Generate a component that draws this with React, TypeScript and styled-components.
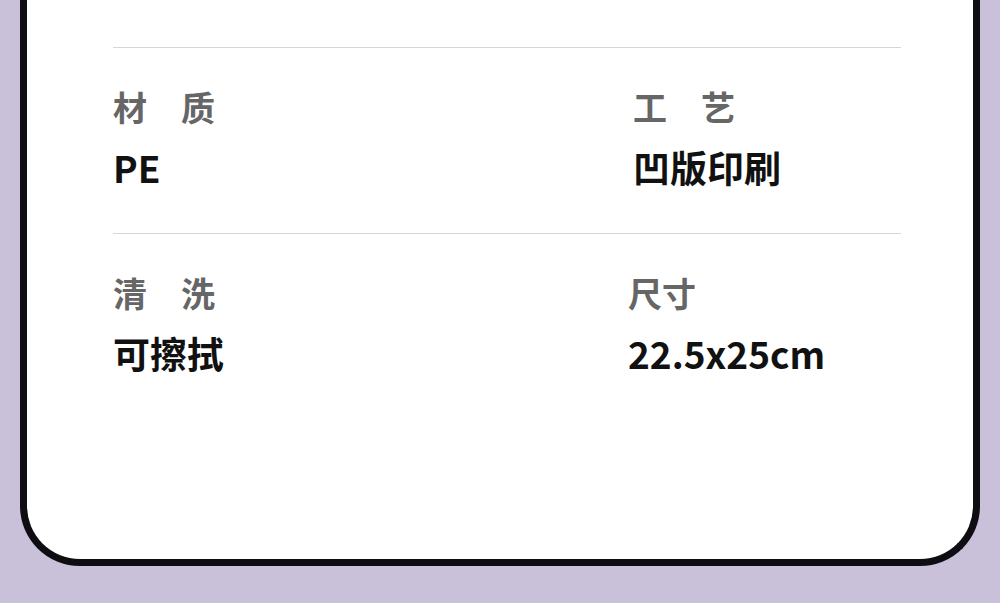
import * as React from 'react';
import styled, { createGlobalStyle } from 'styled-components';

const GlobalStyle = createGlobalStyle`
  html, body {
    margin: 0;
    padding: 0;
    background: #c9c0da;
    overflow: hidden;
  }
  body {
    font-family: "Noto Sans CJK SC", "Noto Sans", sans-serif;
  }
`;

const Page = styled.div`
  width: 1000px;
  height: 603px;
  padding: 0 20px;
  box-sizing: border-box;
  background: #c9c0da;
`;

const Card = styled.div`
  height: 566px;
  box-sizing: border-box;
  background: #fff;
  border: 7px solid #0d0d12;
  border-top: none;
  border-radius: 0 0 60px 60px;
  padding: 47px 72px 0 86px;
`;

const Row = styled.div`
  display: grid;
  grid-template-columns: 518px 1fr;
  border-top: 1.5px solid #d6d6d6;
  height: 186px;
  box-sizing: border-box;
  padding-top: 36px;
`;

const Cell = styled.div<{ $shift?: number }>`
  display: flex;
  flex-direction: column;
  gap: 14px;
  margin-left: ${(p) => p.$shift ?? 0}px;
`;

const Label = styled.div`
  font-size: 34px;
  line-height: 46px;
  font-weight: 700;
  color: #666666;
  white-space: pre;
`;

const Value = styled.div`
  font-size: 37px;
  line-height: 46px;
  font-weight: 700;
  color: #111111;
`;

const specs = [
  [
    { label: '材\u3000质', value: 'PE', shift: 0 },
    { label: '工\u3000艺', value: '凹版印刷', shift: 2 },
  ],
  [
    { label: '清\u3000洗', value: '可擦拭', shift: 0 },
    { label: '尺寸', value: '22.5x25cm', shift: -3 },
  ],
];

const App = () => {
  return (
    <Page>
      <GlobalStyle />
      <Card>
        {specs.map((row, i) => (
          <Row key={i}>
            {row.map((item) => (
              <Cell key={item.label} $shift={item.shift}>
                <Label>{item.label}</Label>
                <Value>{item.value}</Value>
              </Cell>
            ))}
          </Row>
        ))}
      </Card>
    </Page>
  );
};

export default App;
